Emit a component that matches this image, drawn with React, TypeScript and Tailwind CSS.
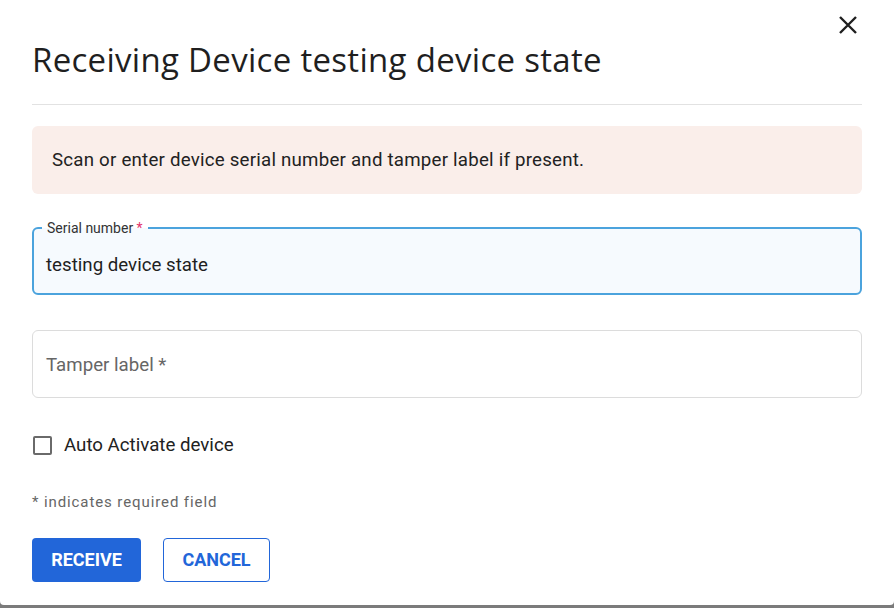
import React from "react";

export default function App() {
  return (
    <div className="w-[894px] h-[608px] bg-[#7b7b7b] overflow-hidden" style={{ fontFamily: "Roboto, 'Liberation Sans', sans-serif" }}>
      <div className="relative w-[894px] h-[605px] bg-white rounded-b-[4px] px-[32px] pt-[39px] flex flex-col">
        <button className="absolute right-[36px] top-[15px] w-[20px] h-[20px] flex items-center justify-center">
          <svg width="20" height="20" viewBox="0 0 20 20">
            <path d="M2 2 L18 18 M18 2 L2 18" stroke="#1f1f1f" strokeWidth="2.4" strokeLinecap="butt" />
          </svg>
        </button>
        <h1 className="text-[33px] leading-[42px] text-[#1f1f1f] font-normal whitespace-nowrap tracking-[0.3px]" style={{ fontFamily: "'Open Sans', Lato, sans-serif" }}>
          Receiving Device testing device state
        </h1>
        <div className="mt-[23px] h-px bg-[#e2e2e2]" />
        <div className="mt-[21px] h-[68px] rounded-[6px] bg-[#faeeea] flex items-center px-[20px] text-[18.7px] tracking-[0.22px] text-[#222]">
          Scan or enter device serial number and tamper label if present.
        </div>
        <div className="relative mt-[33px] h-[68px] rounded-[6px] border-2 border-[#4ba3dd] bg-[#f6fafe] flex items-center px-[12px] text-[18.7px] text-[#1f1f1f]">
          <span className="absolute left-[8px] top-[-9px] px-[5px] text-[14px] leading-[17px] text-[#333]" style={{ background: "linear-gradient(to bottom, #ffffff 50%, #f6fafe 50%)" }}>
            Serial number <span className="text-[#e2336b]">*</span>
          </span>
          <span className="mt-[9px]">testing device state</span>
        </div>
        <div className="mt-[35px] h-[68px] rounded-[6px] border border-[#dcdcdc] flex items-center px-[13px] pt-[3px] text-[18.7px] text-[#666]">
          Tamper label *
        </div>
        <label className="mt-[33px] flex items-center gap-[12px] text-[18.7px] text-[#222]">
          <span className="ml-[1px] w-[19px] h-[19px] rounded-[2px] border-2 border-[#6a6a6a]" />
          Auto Activate device
        </label>
        <div className="mt-[32px] text-[15px] text-[#666] tracking-[0.9px]">* indicates required field</div>
        <div className="mt-[24px] flex gap-[22px]">
          <button className="w-[109px] h-[44px] rounded-[4px] bg-[#2266d9] text-white text-[18px] font-bold">RECEIVE</button>
          <button className="w-[107px] h-[44px] rounded-[4px] border border-[#2266d9] text-[#2266d9] text-[18px] font-bold">CANCEL</button>
        </div>
      </div>
    </div>
  );
}
